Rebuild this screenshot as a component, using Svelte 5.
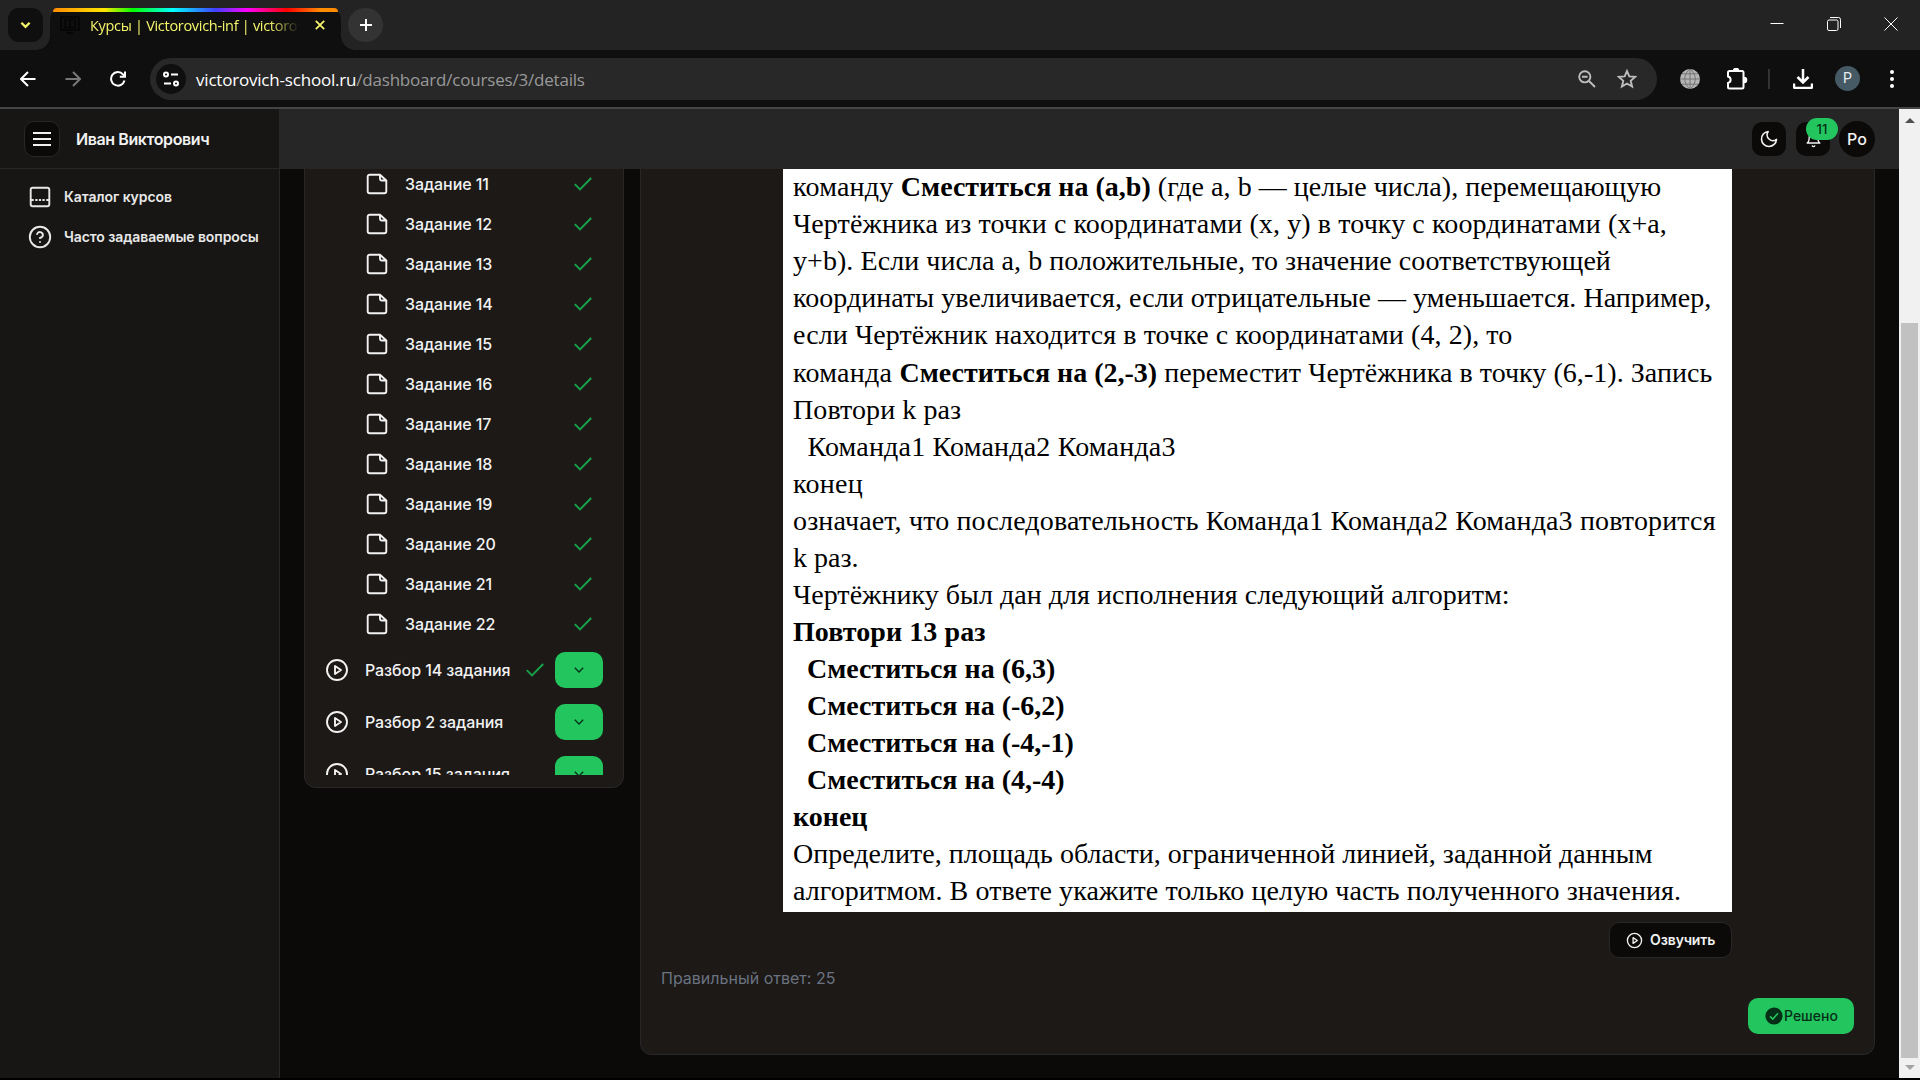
<script>
  const tasks = [11, 12, 13, 14, 15, 16, 17, 18, 19, 20, 21, 22];
  const lessons = [
    { name: 'Разбор 14 задания', done: true },
    { name: 'Разбор 2 задания', done: false },
    { name: 'Разбор 15 задания', done: false }
  ];
  // Each run is [text, tracking in px, bold]
  const lines = [
    [['команду ', 0.25], ['Сместиться на (a,b)', 0, 1], [' (где a, b — целые числа), перемещающую', 0.045]],
    [['Чертёжника из точки с координатами (x, y) в точку с координатами (x+a,', 0.11]],
    [['y+b). Если числа a, b положительные, то значение соответствующей', 0.06]],
    [['координаты увеличивается, если отрицательные — уменьшается. Например,', 0.045]],
    [['если Чертёжник находится в точке с координатами (4, 2), то', 0.09]],
    [['команда ', 0.28], ['Сместиться на (2,-3)', 0, 1], [' переместит Чертёжника в точку (6,-1). Запись', 0.04]],
    [['Повтори k раз', 0.09]],
    [['\u00a0\u00a0Команда1 Команда2 Команда3', 0.2]],
    [['конец', 0.3]],
    [['означает, что последовательность Команда1 Команда2 Команда3 повторится', 0.15]],
    [['k раз.', 0]],
    [['Чертёжнику был дан для исполнения следующий алгоритм:', 0.035]],
    [['Повтори 13 раз', 0.08, 1]],
    [['\u00a0\u00a0Сместиться на (6,3)', 0, 1]],
    [['\u00a0\u00a0Сместиться на (-6,2)', 0, 1]],
    [['\u00a0\u00a0Сместиться на (-4,-1)', 0, 1]],
    [['\u00a0\u00a0Сместиться на (4,-4)', 0, 1]],
    [['конец', 0, 1]],
    [['Определите, площадь области, ограниченной линией, заданной данным', 0.02]],
    [['алгоритмом. В ответе укажите только целую часть полученного значения.', 0.088]]
  ];
</script>

{#snippet check()}
  <svg class="check" viewBox="0 0 18 14" width="18" height="14"><path d="M.8 7.2 6 12.5 17.2 1" /></svg>
{/snippet}

{#snippet play(size)}
  <svg class="line" viewBox="0 0 24 24" width={size} height={size}><circle cx="12" cy="12" r="10" /><path d="m10 8 6 4-6 4z" /></svg>
{/snippet}

<div class="window">
  <div class="tabs">
    <div class="chevron"><svg viewBox="0 0 12 8" width="11" height="8"><path d="m1.500 1.500 4.500 4.500 4.500-4.500" /></svg></div>
    <div class="tab">
      <div class="rainbow"></div>
      <div class="tab-row">
        <svg class="fav" viewBox="0 0 20 18" width="20" height="18"><path d="M1 1h18v13H1zM5 3.500h4.500l.5.5.5-.5H15v8h-4.500l-.5.5-.5-.5H5zM10 4v8M7 17h6" /></svg>
        <span class="tab-title">Курсы | Victorovich-inf | victorovich</span>
        <svg class="tab-x" viewBox="0 0 10 10" width="10" height="10"><path d="m.8.800 8.400 8.400M9.200.8.800 9.200" /></svg>
      </div>
    </div>
    <div class="newtab"><svg viewBox="0 0 14 14" width="12" height="12"><path d="M7 0v14M0 7h14" /></svg></div>
    <div class="controls">
      <svg viewBox="0 0 14 14" width="14" height="14"><path d="M.5 6.500h13" /></svg>
      <svg viewBox="0 0 14 14" width="14" height="14"><rect x=".5" y="3" width="10.500" height="10.500" rx="1.500" /><path d="M3 .5h8.500a2 2 0 0 1 2 2V11" /></svg>
      <svg viewBox="0 0 14 14" width="14" height="14"><path d="m.5.500 13 13M13.500.500l-13 13" /></svg>
    </div>
  </div>

  <div class="toolbar">
    <svg class="nav" viewBox="0 0 16 16" width="16" height="16"><path d="M15.500 8H1.500M8 1 1 8l7 7" /></svg>
    <svg class="nav dim" viewBox="0 0 16 16" width="16" height="16"><path d="M.5 8h14M8 1l7 7-7 7" /></svg>
    <svg class="nav" viewBox="0 0 16 16" width="16" height="16"><path d="M14.500 9.500A6.800 6.800 0 1 1 13 3.300L14.500 5M15 .5v5.200H9.800" /></svg>
    <div class="address">
      <div class="site"><svg viewBox="0 0 16 16" width="16" height="16"><circle cx="3" cy="3.500" r="2" /><path d="M8 3.500h7M1 12.500h7" /><circle cx="13" cy="12.500" r="2" /></svg></div>
      <div class="url"><b>victorovich-school.ru</b>/dashboard/courses/3/details</div>
      <svg class="addr-ic" viewBox="0 0 18 18" width="18" height="18"><circle cx="6.800" cy="6.800" r="5.600" /><path d="m11 11 6 6M4 6.800h5.600" /></svg>
      <svg class="addr-ic star" viewBox="0 0 20 20" width="20" height="20"><path d="m10 2 2.300 5.400 5.900.5-4.500 3.900 1.400 5.800L10 14.500l-5.100 3.100 1.400-5.800-4.500-3.900 5.900-.5z" /></svg>
    </div>
    <div class="extensions">
      <svg class="globe" viewBox="0 0 20 20" width="20" height="20"><circle cx="10" cy="10" r="10" /><path d="M10 0v20M0 10h20M2 4.800h16M2 15.200h16M10 0c-7 5-7 15 0 20M10 0c7 5 7 15 0 20" /></svg>
      <svg class="puzzle" viewBox="0 0 22 22" width="22" height="22"><path d="M2 4.500a1.500 1.500 0 0 1 1.500-1.500H16a1.500 1.500 0 0 1 1.500 1.500v14.500a1.500 1.500 0 0 1-1.500 1.500H3.500A1.500 1.500 0 0 1 2 19v-4c3.500-1 3.500-5.500 0-6.500z" /><path class="fill" d="M7.800 3a2.300 2.300 0 0 1 4.600 0zM18 9.700a2.300 2.300 0 0 1 0 4.600z" /></svg>
      <i class="sep"></i>
      <svg class="dl" viewBox="0 0 20 20" width="20" height="20"><path d="M10 0v13M4.500 8l5.500 5.500L15.500 8M1 14.500v3.300c0 .7.500 1.200 1.200 1.200h15.600c.7 0 1.200-.5 1.200-1.200v-3.300" /></svg>
      <span class="profile">P</span>
      <svg class="dots" viewBox="0 0 4 18" width="4" height="18"><circle cx="2" cy="2" r="2" /><circle cx="2" cy="9" r="2" /><circle cx="2" cy="16" r="2" /></svg>
    </div>
  </div>

  <div class="page">
    <aside>
      <div class="brand">
        <div class="burger"><svg viewBox="0 0 18 14" width="18" height="14"><path d="M0 1h18M0 7h18M0 13h18" /></svg></div>
        <span>Иван Викторович</span>
      </div>
      <nav>
        <div class="link"><svg class="line" viewBox="0 0 24 24" width="24" height="24"><rect x="2.700" y="2.700" width="18.600" height="18.600" rx="2" /><path d="M3 15h2M8 15h.8M11.600 15h.8M15.200 15h.8M19 15h2" /></svg>Каталог курсов</div>
        <div class="link"><svg class="line" viewBox="0 0 24 24" width="24" height="24"><circle cx="12" cy="12" r="10.200" /><path d="M9.100 9a3 3 0 0 1 5.800 1c0 2-3 3-3 3M12 17h.01" /></svg>Часто задаваемые вопросы</div>
      </nav>
    </aside>

    <div class="main">
      <header>
        <div class="hbtn"><svg class="line" viewBox="0 0 24 24" width="20" height="20"><path d="M11 3a7 7 0 0 0 10 9.500A9 9 0 1 1 11 3Z" /></svg></div>
        <div class="hbtn bell"><svg class="line" viewBox="0 0 24 24" width="17" height="17"><path d="M6 8a6 6 0 0 1 12 0c0 7 3 9 3 9H3s3-2 3-9M10.300 21a1.940 1.940 0 0 0 3.400 0" /></svg><span class="badge">11</span></div>
        <div class="avatar">Po</div>
      </header>
      <div class="content">
        <section class="lessons">
          <div class="scroll">
            {#each tasks as n}
              <div class="task">
                <svg class="line" viewBox="0 0 24 24" width="24" height="24"><path d="M15 2.700H4.700a2 2 0 0 0-2 2v14.600a2 2 0 0 0 2 2h14.600a2 2 0 0 0 2-2V8.500zM15 2.700v4.300a1.500 1.500 0 0 0 1.500 1.500h4.800" /></svg>
                <span>Задание {n}</span>
                {@render check()}
              </div>
            {/each}
            {#each lessons as l}
              <div class="lesson">
                {@render play(24)}
                <span>{l.name}</span>
                {#if l.done}{@render check()}{/if}
                <div class="toggle"><svg viewBox="0 0 10 6" width="10" height="6"><path d="m.8.800L5 5 9.200.8" /></svg></div>
              </div>
            {/each}
          </div>
        </section>
        <section class="detail">
          <div class="paper">
            {#each lines as line}
              <p>{#each line as [text, tracking, bold]}<span class:bold style:letter-spacing="{tracking}px">{text}</span>{/each}</p>
            {/each}
          </div>
          <div class="voice">{@render play(17)}Озвучить</div>
          <div class="answer">Правильный ответ: 25</div>
          <div class="solved"><svg viewBox="0 0 18 18" width="18" height="18"><circle cx="9" cy="9" r="8.600" /><path d="m5 9.300 2.800 2.700 5.200-5.700" /></svg>Решено</div>
        </section>
      </div>
    </div>

    <div class="scrollbar">
      <i class="up"></i>
      <div class="thumb"></div>
      <i class="down"></i>
    </div>
  </div>
</div>

<style>
  :global(body) { margin: 0; background: #000; overflow: hidden; }
  .window { width: 1920px; height: 1080px; display: flex; flex-direction: column; font-family: Inter, sans-serif; color: #f2f2f2; background: #000; overflow: hidden; }
  .window, .window :global(*) { box-sizing: border-box; }
  svg { display: block; flex: none; fill: none; stroke: currentColor; }
  .line { stroke-width: 1.9; stroke-linecap: round; stroke-linejoin: round; }

  .tabs { height: 50px; flex: none; background: #232323; display: flex; padding-left: 8px; }
  .chevron { width: 35px; height: 34px; margin-top: 8px; border-radius: 11px; background: #0f0f0f; color: #f5f56b; display: grid; place-items: center; }
  .chevron svg { stroke-width: 2.5; }
  .tab { position: relative; width: 291px; height: 42px; margin: 8px 0 0 7px; background: #0f0f0f; border-radius: 12px 12px 0 0; }
  .tab::before, .tab::after { content: ''; position: absolute; bottom: 0; width: 14px; height: 14px; }
  .tab::before { left: -14px; background: radial-gradient(circle at 0 0, transparent 13.500px, #0f0f0f 14px); }
  .tab::after { right: -14px; background: radial-gradient(circle at 100% 0, transparent 13.500px, #0f0f0f 14px); }
  .rainbow { height: 4px; margin: 0 3px; border-radius: 8px 8px 0 0; background: linear-gradient(90deg, #ff8c00, #ffe600 18%, #0f0 28%, #0ff 42%, #4040ff 57%, #f0f 68%, #f00 82%, #ff8c00 94%); }
  .tab-row { display: flex; align-items: center; height: 26px; padding: 0 16px 0 10px; }
  .fav { color: #050505; stroke-width: 1.500; }
  .tab-title { flex: 1; margin: 1px 16px 0 10px; font: 14.500px/21px "Open Sans", sans-serif; letter-spacing: -.3px; color: #f5f56b; white-space: nowrap; overflow: hidden; -webkit-mask-image: linear-gradient(90deg, #000 86%, transparent); mask-image: linear-gradient(90deg, #000 86%, transparent); }
  .tab-x { color: #f5f56b; stroke-width: 1.800; }
  .newtab { width: 35px; height: 34px; margin: 8px 0 0 7px; border-radius: 17px; background: #333; display: grid; place-items: center; color: #fff; }
  .newtab svg { stroke-width: 2.300; }
  .controls { margin-left: auto; display: flex; gap: 43px; padding: 17px 22px 0 0; color: #fff; }

  .toolbar { height: 59px; flex: none; background: #0f0f0f; border-bottom: 2px solid #454545; display: flex; align-items: center; padding: 0 26px 0 20px; }
  .nav { margin-right: 29px; color: #fff; stroke-width: 2; }
  .dim { color: #777; }
  .address { width: 1507px; height: 42px; border-radius: 21px; background: #282828; display: flex; align-items: center; padding: 0 20px 0 6px; margin-left: -5px; }
  .site { width: 30px; height: 30px; border-radius: 50%; background: #0f0f0f; display: grid; place-items: center; color: #fff; }
  .site svg { stroke-width: 2; }
  .url { flex: 1; margin: 2px 0 0 10px; font: 17px/24px "Open Sans", sans-serif; letter-spacing: -.2px; color: #999; }
  .url b { font-weight: 400; color: #fff; }
  .addr-ic { color: #bdbdbd; stroke-width: 1.900; }
  .star { margin-left: 21px; }
  .extensions { display: flex; align-items: center; flex: 1; margin-left: 23px; }
  .globe { fill: #b5b5b5; stroke: none; }
  .globe path { fill: none; stroke: #757575; }
  .puzzle { margin-left: 26px; stroke-width: 2; color: #fff; }
  .fill { fill: #fff; }
  .sep { width: 2px; height: 20px; background: #333; margin-left: 20px; }
  .dl { margin-left: 23px; color: #fff; stroke-width: 2.500; }
  .profile { width: 25px; height: 25px; border-radius: 50%; background: #455a64; font: 14px/25px Roboto, sans-serif; text-align: center; color: #e8eef0; margin-left: 22px; }
  .dots { margin-left: auto; fill: #fff; stroke: none; }

  .page { height: 969px; display: flex; background: #0c0a09; }
  aside { width: 280px; background: #171614; border-right: 1px solid #27272a; }
  .brand { height: 60px; border-bottom: 1px solid #27272a; display: flex; align-items: center; gap: 16px; padding-left: 24px; font: 600 16px/24px Inter, sans-serif; letter-spacing: -.4px; }
  .burger { width: 36px; height: 36px; border: 1px solid #27272a; border-radius: 10px; background: #0c0a09; display: grid; place-items: center; }
  .burger svg { stroke-width: 2; }
  nav { padding-top: 8px; }
  .link { height: 40px; display: flex; align-items: center; gap: 12px; padding-left: 28px; font: 600 14px/20px Inter, sans-serif; letter-spacing: -.09px; color: #e8e8e8; white-space: nowrap; }
  .main { width: 1619px; display: flex; flex-direction: column; }
  header { height: 60px; background: #262626; display: flex; align-items: center; justify-content: flex-end; padding-right: 24px; }
  .hbtn { position: relative; width: 34px; height: 34px; border-radius: 10px; background: #0c0a09; display: grid; place-items: center; margin-right: 10px; }
  .bell { margin-right: 9px; }
  .badge { position: absolute; left: 10px; top: -4px; width: 32px; height: 22px; border-radius: 11px; background: #22c55e; color: #052e16; font: 500 13px/22px Inter, sans-serif; text-align: center; }
  .avatar { width: 36px; height: 36px; border-radius: 50%; background: #0c0a09; font: 500 16px/36px Inter, sans-serif; text-align: center; }
  .content { height: 909px; overflow: hidden; display: flex; align-items: flex-start; padding-left: 24px; gap: 16px; }
  section { background: #1c1917; border: 1px solid #27272a; border-top: 0; border-radius: 0 0 12px 12px; }
  .lessons { width: 320px; height: 619px; }
  .scroll { height: 606px; overflow: hidden; padding: 0 20px; }
  .task { height: 40px; display: flex; align-items: center; padding: 0 11px 0 40px; font: 500 16px/24px Inter, sans-serif; letter-spacing: -.09px; transform: translateY(-5px); }
  .task span { margin-left: 16px; flex: 1; }
  .check { color: #16a34a; stroke-width: 1.900; }
  .lesson { height: 52px; display: flex; align-items: center; font: 500 16px/24px Inter, sans-serif; letter-spacing: -.08px; transform: translateY(-5px); }
  .lesson span { margin-left: 16px; flex: 1; }
  .toggle { width: 48px; height: 36px; margin-left: 11px; border-radius: 10px; background: #22c55e; color: #052e16; display: grid; place-items: center; }
  .toggle svg { stroke-width: 1.300; }
  .detail { width: 1235px; height: 886px; display: flex; flex-direction: column; padding: 0 20px; }
  .paper { width: 949px; height: 743px; margin-left: 122px; padding: 0 10px; background: #fff; color: #000; font: 28px/36px "Liberation Serif", serif; white-space: pre; }
  .paper p { margin: 0; height: 37px; }
  .paper p:nth-child(5) { height: 38px; }
  .bold { font-weight: 700; }
  .voice { width: 123px; height: 36px; margin: 10px 0 0 948px; border: 1px solid #27272a; border-radius: 10px; background: #0c0a09; display: flex; align-items: center; gap: 7px; padding-left: 16px; font: 600 14px/20px Inter, sans-serif; letter-spacing: -.1px; }
  .answer { margin-top: 8px; font: 16px/24px Inter, sans-serif; color: #6b7280; }
  .solved { align-self: flex-end; width: 106px; height: 36px; margin-top: 8px; border-radius: 10px; background: #22c55e; color: #052e16; display: flex; align-items: center; gap: 1px; padding-left: 17px; font: 500 14px/20px Inter, sans-serif; }
  .solved svg { fill: #052e16; stroke: none; }
  .solved path { fill: none; stroke: #22c55e; stroke-width: 1.600; }
  .scrollbar { width: 21px; background: #f1f1f1; display: flex; flex-direction: column; align-items: center; }
  .up, .down { border: 5px solid transparent; }
  .up { border-bottom-color: #505050; border-top: 0; margin-top: 9px; }
  .thumb { width: 17px; height: 735px; margin-top: 200px; background: #c1c1c1; }
  .down { border-top-color: #a3a3a3; border-bottom: 0; margin-top: 7px; }
</style>
